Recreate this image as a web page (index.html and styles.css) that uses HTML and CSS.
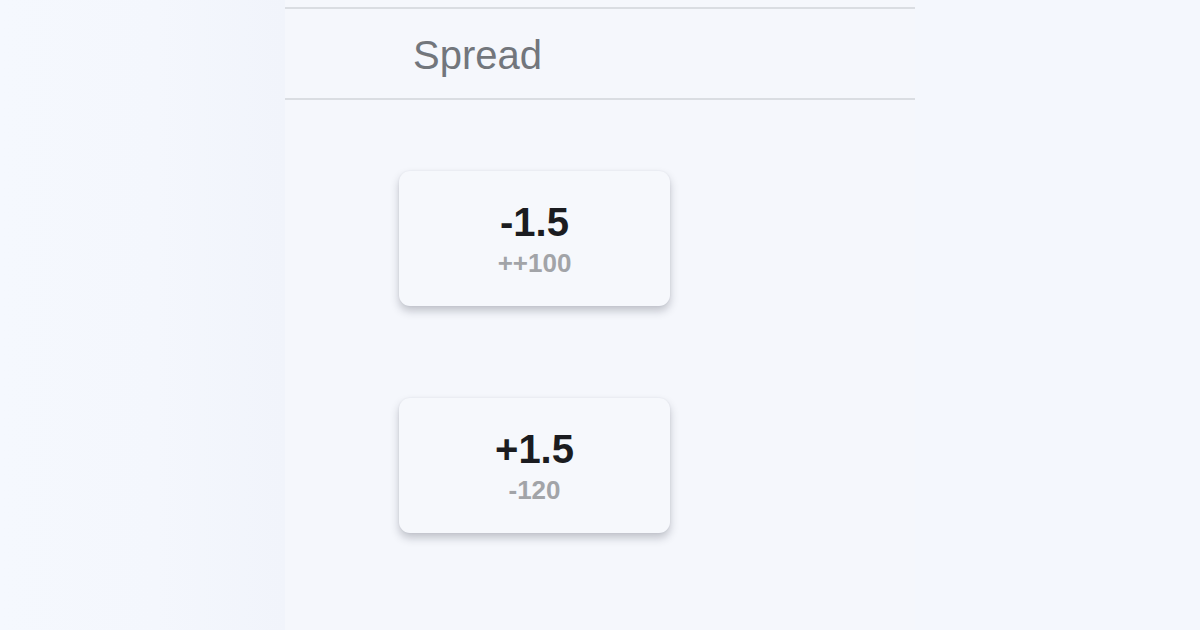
FILE: index.html
```html
<!DOCTYPE html>
<html lang="en">
<head>
<meta charset="utf-8">
<title>Spread</title>
<link rel="stylesheet" href="styles.css">
</head>
<body>
<div class="page">
  <aside class="side side-left"></aside>
  <main class="panel">
    <div class="market-head">
      <span class="market-title">Spread</span>
    </div>
    <div class="odds-list">
      <button class="odds-card">
        <span class="odds-line">-1.5</span>
        <span class="odds-price">++100</span>
      </button>
      <button class="odds-card">
        <span class="odds-line">+1.5</span>
        <span class="odds-price">-120</span>
      </button>
    </div>
  </main>
  <aside class="side side-right"></aside>
</div>
</body>
</html>
```

FILE: styles.css
```css
html, body {
  margin: 0;
  padding: 0;
}

body {
  width: 1200px;
  height: 630px;
  overflow: hidden;
  background: #f4f7fd;
  font-family: "Liberation Sans", Arial, Helvetica, sans-serif;
}

.page {
  display: flex;
  height: 630px;
}

.side {
  flex: 1;
}

.side-left {
  flex: 0 0 285px;
  background: linear-gradient(90deg, #f5f8fe 0%, #f4f7fd 55%, #f1f4fb 100%);
}

.side-right {
  background: #f4f7fd;
}

.panel {
  flex: 0 0 630px;
  background: #f5f7fc;
  padding-top: 7px;
  box-sizing: border-box;
  overflow: hidden;
}

.market-head {
  height: 89px;
  border-top: 2px solid #dadde2;
  border-bottom: 2px solid #dadde2;
  display: flex;
  align-items: center;
  padding-left: 128px;
}

.market-title {
  font-size: 40px;
  color: #72767c;
  line-height: 1;
  margin-top: 2px;
}

.odds-list {
  display: flex;
  flex-direction: column;
  gap: 92px;
  padding: 71px 0 0 114px;
}

.odds-card {
  width: 271px;
  height: 135px;
  border: none;
  border-radius: 11px;
  background: #f6f8fc;
  box-shadow: 0 5px 8px rgba(40, 44, 60, 0.25), 0 0 2px rgba(40, 44, 60, 0.08);
  display: flex;
  flex-direction: column;
  align-items: center;
  justify-content: center;
  padding: 0;
  font-family: inherit;
  cursor: pointer;
}

.odds-line {
  font-size: 40px;
  font-weight: 700;
  color: #1b1c20;
  line-height: 44px;
}

.odds-price {
  margin-top: 4px;
  font-size: 26px;
  font-weight: 700;
  color: #a2a4a8;
  line-height: 30px;
}
```
